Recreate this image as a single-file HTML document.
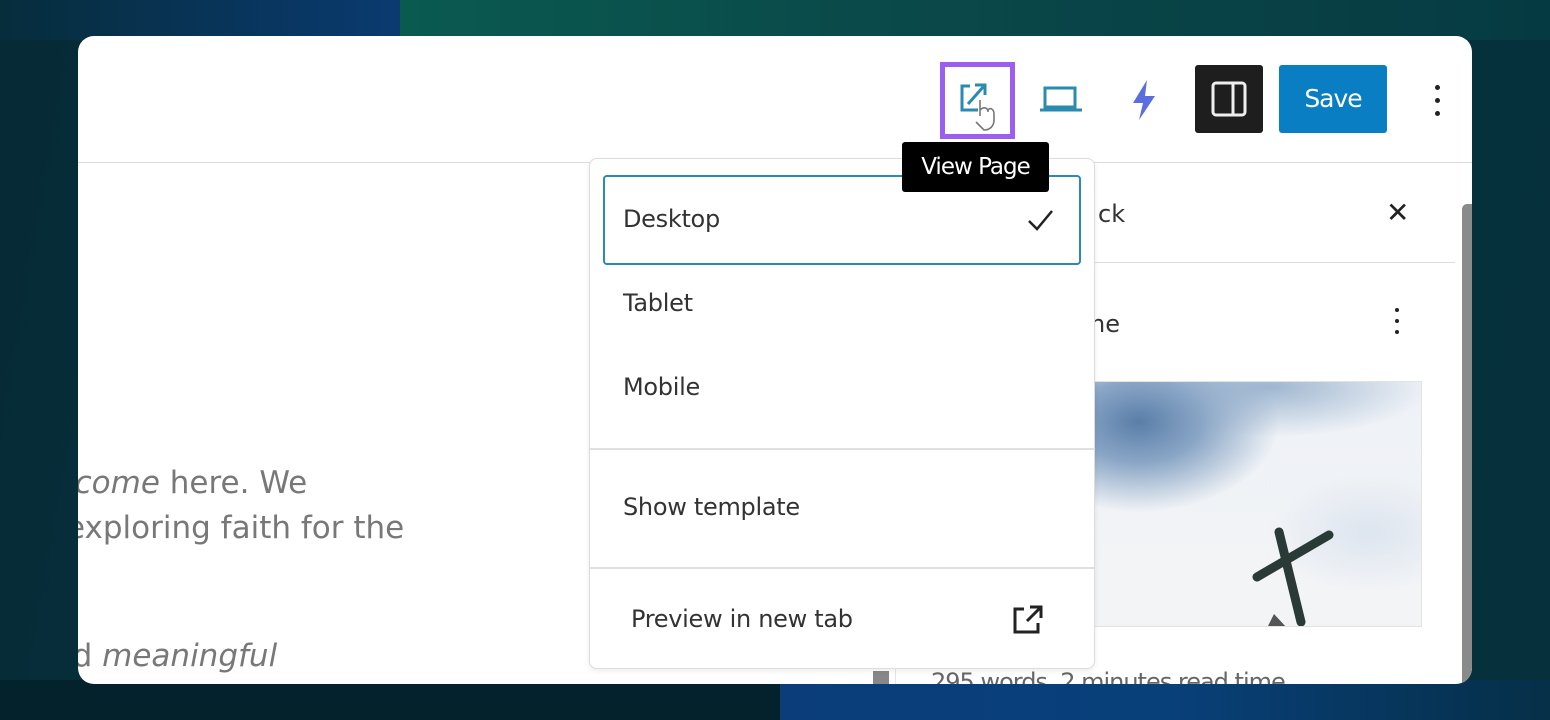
<!DOCTYPE html>
<html><head><meta charset="utf-8"><style>
*{box-sizing:border-box;margin:0;padding:0}
body{width:1550px;height:720px;overflow:hidden;font-family:"Liberation Sans",sans-serif;
background:linear-gradient(100deg,#062a36 0%,#063642 40%,#05303c 100%);position:relative}
.bg1{position:absolute;left:400px;top:0;width:1150px;height:40px;background:linear-gradient(90deg,#0a5a50,#0a4a4a 40%,#063a42)}
.bg0{position:absolute;left:0;top:0;width:420px;height:40px;background:linear-gradient(90deg,#062d3c,#0a3a70 95%)}
.bg2{position:absolute;left:780px;top:680px;width:770px;height:40px;background:linear-gradient(90deg,#0a3d7a,#08407a 50%,#062f48)}
.bg3{position:absolute;left:0;top:680px;width:800px;height:40px;background:#04222c}
.card{position:absolute;left:78px;top:36px;width:1394px;height:648px;background:#fff;border-radius:16px;overflow:hidden}
.hdr{position:absolute;left:0;top:0;width:100%;height:127px;border-bottom:1px solid #ddd}
.abs{position:absolute}
.txt{position:absolute;color:#787878;font-size:31px;white-space:nowrap;font-family:"DejaVu Sans","Liberation Sans",sans-serif;letter-spacing:0}
.menu{position:absolute;left:511px;top:122px;width:506px;height:511px;background:#fff;border:1px solid #ddd;border-radius:8px;box-shadow:0 2px 6px rgba(0,0,0,.08)}
.mi{position:absolute;left:33px;font-size:24px;color:#333;font-family:"DejaVu Sans","Liberation Sans",sans-serif;letter-spacing:-0.3px}
.sep{position:absolute;left:0;width:100%;height:2px;background:#e0e0e0}
</style></head><body>
<div class="bg0"></div><div class="bg1"></div><div class="bg3"></div><div class="bg2"></div>
<div class="card">
 <div class="hdr"></div>
 <div class="txt" style="left:-12px;top:429px"><i>lcome</i> here. We</div>
 <div class="txt" style="left:-12px;top:474px">exploring faith for the</div>
 <div class="txt" style="left:-14px;top:602px">ld <i>meaningful</i></div>
 <div class="abs" style="left:817px;top:127px;width:1px;height:521px;background:#e6e6e6"></div>
 <div class="abs" style="left:795px;top:635px;width:16px;height:13px;background:#888"></div>
 <div class="abs" style="left:1017px;top:226px;width:360px;height:1px;background:#ddd"></div>
 <div class="abs" style="left:1020px;top:164px;font-size:24px;color:#333;font-family:'DejaVu Sans',sans-serif">ck</div>
 <div class="abs" style="left:1308px;top:160px;font-size:28px;color:#222">✕</div>
 <div class="abs" style="left:1012px;top:274px;font-size:24px;color:#333;font-family:'DejaVu Sans',sans-serif">ne</div>
 <div class="abs" style="left:1317px;top:272px;width:4px;height:4px;border-radius:2px;background:#222;box-shadow:0 11px 0 #222,0 22px 0 #222"></div>
 <div class="abs" style="left:1010px;top:345px;width:334px;height:246px;border:1px solid #e3e3e3;overflow:hidden;
   background:radial-gradient(ellipse 140px 90px at 50px 40px,#5a7ea8 0%,#8aa6c6 45%,transparent 100%),radial-gradient(ellipse 160px 50px at 180px 5px,#9fb6d0,transparent),radial-gradient(ellipse 100px 60px at 280px 150px,#dde5ef,transparent),linear-gradient(#eef2f7,#f3f4f6)">
   <svg width="334" height="246" style="position:absolute;left:0;top:0"><g stroke="#2a3a36" stroke-width="9" stroke-linecap="round"><line x1="168" y1="195" x2="240" y2="153"/><line x1="190" y1="150" x2="212" y2="240"/></g><path d="M185 232 L198 246 L178 246Z" fill="#555"/></svg>
 </div>
 <div class="abs" style="left:853px;top:632px;font-size:24px;color:#666;font-family:'DejaVu Sans',sans-serif;letter-spacing:-1px">295 words, 2 minutes read time</div>
 <div class="abs" style="left:1384px;top:168px;width:10px;height:480px;background:#8a8a8a;border-radius:5px 0 0 0"></div>
 <div class="menu">
  <div class="abs" style="left:13px;top:16px;width:478px;height:90px;border:2px solid #2b89b5;border-radius:4px"></div>
  <div class="mi" style="top:46px">Desktop</div>
  <svg class="abs" style="left:436px;top:48px" width="30" height="26"><path d="M3 14 L11 22 L26 4" fill="none" stroke="#222" stroke-width="2.5"/></svg>
  <div class="mi" style="top:130px">Tablet</div>
  <div class="mi" style="top:214px">Mobile</div>
  <div class="sep" style="top:289px"></div>
  <div class="mi" style="top:334px">Show template</div>
  <div class="sep" style="top:408px"></div>
  <div class="mi" style="top:446px;left:41px">Preview in new tab</div>
  <svg class="abs" style="left:418px;top:441px" width="40" height="40"><path d="M16 9 H7 V32 H30 V23" fill="none" stroke="#222" stroke-width="3"/><path d="M19 21 L32 8 M22 7 H33 V18" fill="none" stroke="#222" stroke-width="3"/></svg>
 </div>
 <div class="abs" style="left:824px;top:106px;width:147px;height:50px;background:#000;border-radius:3px;color:#fff;font-size:23px;line-height:50px;text-align:center;font-family:'DejaVu Sans',sans-serif;letter-spacing:-1px">View Page</div>
 <div class="abs" style="left:862px;top:26px;width:75px;height:77px;border:5px solid #9b5ef0"></div>
 <svg class="abs" style="left:878px;top:44px" width="44" height="52"><path d="M14 6 H6 V30 H22" fill="none" stroke="#2a8ab0" stroke-width="3"/><path d="M12 24 L28 6 M19 5 H29 V15" fill="none" stroke="#2a8ab0" stroke-width="3"/><path d="M24 20 V36 M24 30 C28 26 32 28 32 32 M32 30 C34 27 38 29 38 34 V40 C38 46 34 50 28 50 L20 42" fill="#fff" stroke="#777" stroke-width="1.6"/></svg>
 <svg class="abs" style="left:960px;top:48px" width="46" height="30"><rect x="7" y="4" width="30" height="19" fill="none" stroke="#2a8ab0" stroke-width="3"/><path d="M2 26 H44" stroke="#2a8ab0" stroke-width="3"/></svg>
 <svg class="abs" style="left:1051px;top:42px" width="30" height="44"><path d="M18 2 L4 25 H14 L10 42 L26 18 H16 Z" fill="#5a6ee0"/></svg>
 <div class="abs" style="left:1117px;top:29px;width:68px;height:68px;background:#1e1e1e;border-radius:3px"></div>
 <svg class="abs" style="left:1131px;top:43px" width="40" height="40"><rect x="4" y="4" width="32" height="32" rx="3" fill="none" stroke="#eee" stroke-width="3"/><path d="M24 4 V36" stroke="#eee" stroke-width="3"/></svg>
 <div class="abs" style="left:1201px;top:29px;width:108px;height:68px;background:#0a7ec2;border-radius:3px;color:#fff;font-size:25px;line-height:68px;text-align:center;font-family:'DejaVu Sans',sans-serif;letter-spacing:-1px">Save</div>
 <div class="abs" style="left:1357px;top:49px;width:5px;height:5px;border-radius:3px;background:#222;box-shadow:0 13px 0 #222,0 26px 0 #222"></div>
</div>
</body></html>
